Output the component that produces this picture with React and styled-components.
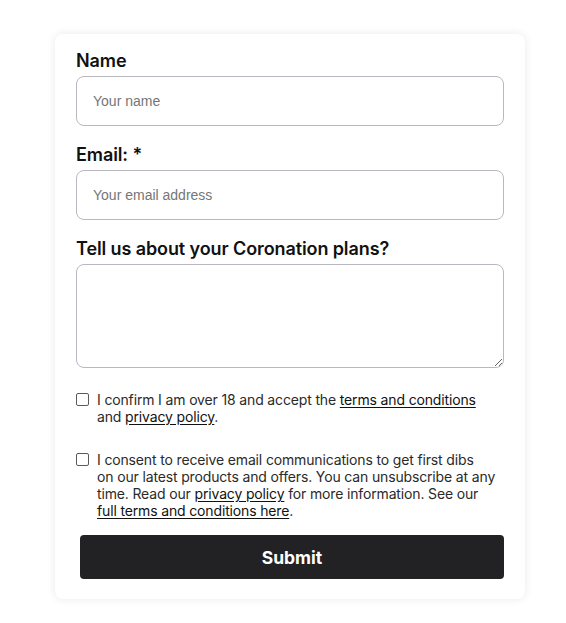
import React from "react";
import styled, { createGlobalStyle } from "styled-components";

const Global = createGlobalStyle`
  html, body { margin: 0; padding: 0; background: #ffffff; }
  body { font-family: "Inter", "Liberation Sans", sans-serif; }
`;

const Page = styled.div`
  padding: 34px 41px 24px 55px;
`;

const Card = styled.form`
  width: 470px;
  box-sizing: border-box;
  background: #fff;
  border-radius: 8px;
  box-shadow: 0 0 10px rgba(0, 0, 0, 0.09);
  padding: 15px 21px 20px 21px;
  display: flex;
  flex-direction: column;
`;

const Field = styled.div`
  display: flex;
  flex-direction: column;
  margin-bottom: ${(p) => p.$mb || 17}px;
`;

const Label = styled.label`
  font-family: "Inter", "Liberation Sans", sans-serif;
  font-weight: 600;
  font-size: 18px;
  line-height: 24px;
  color: #111;
  margin-bottom: 3px;
  letter-spacing: -0.1px;
`;

const Input = styled.input`
  box-sizing: border-box;
  height: 50px;
  width: 100%;
  border: 1px solid #b9b8c0;
  border-radius: 8px;
  padding: 0 16px;
  font-family: "Liberation Sans", Arial, sans-serif;
  font-size: 14px;
  color: #222;
  outline: none;
  &::placeholder { color: #767676; }
`;

const TextArea = styled.textarea`
  box-sizing: border-box;
  height: 104px;
  width: 100%;
  border: 1px solid #b9b8c0;
  border-radius: 8px;
  padding: 12px 16px;
  font-family: "Liberation Sans", Arial, sans-serif;
  font-size: 14px;
  resize: vertical;
  outline: none;
  display: block;
`;

const Consent = styled.div`
  display: flex;
  align-items: flex-start;
  margin-bottom: ${(p) => p.$mb || 0}px;
`;

const Box = styled.input.attrs({ type: "checkbox" })`
  appearance: none;
  -webkit-appearance: none;
  width: 13px;
  height: 13px;
  margin: 2px 8px 0 0;
  flex: 0 0 auto;
  border: 1px solid #5a5a5a;
  border-radius: 2px;
  background: #fff;
  box-sizing: border-box;
`;

const ConsentText = styled.span`
  width: 405px;
  white-space: nowrap;
  font-family: "Inter", "Liberation Sans", sans-serif;
  font-size: 14px;
  line-height: 17px;
  color: #2a2a2a;
  letter-spacing: -0.15px;
`;

const Link = styled.a`
  color: #111;
  text-decoration: underline;
  text-underline-offset: 2px;
`;

const Submit = styled.button`
  margin: 0 0 0 4px;
  height: 44px;
  border: none;
  border-radius: 4px;
  background: #222224;
  color: #fff;
  font-family: "Inter", "Liberation Sans", sans-serif;
  font-weight: 700;
  font-size: 17.5px;
`;

export default function App() {
  return (
    <>
      <Global />
      <Page>
        <Card onSubmit={(e) => e.preventDefault()}>
          <Field>
            <Label>Name</Label>
            <Input placeholder="Your name" />
          </Field>
          <Field>
            <Label>Email: *</Label>
            <Input placeholder="Your email address" />
          </Field>
          <Field $mb={23}>
            <Label>Tell us about your Coronation plans?</Label>
            <TextArea />
          </Field>
          <Consent $mb={26}>
            <Box />
            <ConsentText>
              I confirm I am over 18 and accept the{" "}
              <Link href="#">terms and conditions</Link>
              <br />
              and <Link href="#">privacy policy</Link>.
            </ConsentText>
          </Consent>
          <Consent $mb={16}>
            <Box />
            <ConsentText>
              I consent to receive email communications to get first dibs
              <br />
              on our latest products and offers. You can unsubscribe at any
              <br />
              time. Read our <Link href="#">privacy policy</Link> for more
              information. See our
              <br />
              <Link href="#">full terms and conditions here</Link>.
            </ConsentText>
          </Consent>
          <Submit type="submit">Submit</Submit>
        </Card>
      </Page>
    </>
  );
}
